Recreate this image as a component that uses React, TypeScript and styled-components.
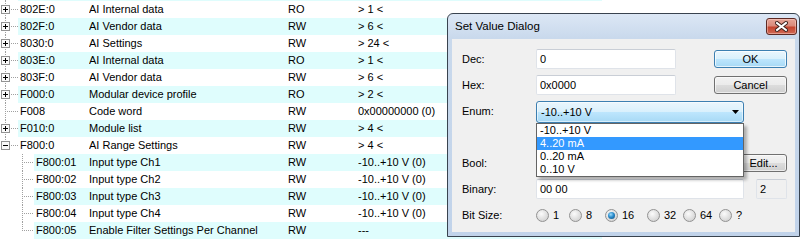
import React from 'react';
import styled, { createGlobalStyle } from 'styled-components';

const GlobalStyle = createGlobalStyle`
  html, body { margin: 0; padding: 0; background: #fff; }
  body { font-family: "Liberation Sans", Arial, sans-serif; font-size: 11px; color: #000; }
  * { box-sizing: border-box; }
`;

const Screen = styled.div`
  position: relative;
  width: 805px;
  height: 241px;
  overflow: hidden;
  background: #fff;
`;

/* ---------- tree list ---------- */

const Tree = styled.div`
  display: flex;
  flex-direction: column;
  width: 602px;
  margin-top: -16px;
`;

const Row = styled.div`
  display: flex;
  height: 17px;
`;

const Gutter = styled.div<{ $level: number }>`
  flex: none;
  width: ${(p) => (p.$level ? 34 : 18)}px;
  height: 17px;
  svg { display: block; }
`;

const RowBody = styled.div<{ $alt: boolean; $level: number }>`
  flex: 1;
  display: grid;
  grid-template-columns: ${(p) => (p.$level ? 53 : 69)}px 199px 70px 1fr;
  align-items: center;
  padding-left: 2px;
  background: ${(p) => (p.$alt ? '#dffdfd' : '#ffffff')};
  white-space: nowrap;
  line-height: 17px;
`;

const Cell = styled.span`
  overflow: hidden;
`;

type TreeRow = {
  idx: string;
  name: string;
  flags: string;
  value: string;
  level: number;
  box?: '+' | '-';
  last?: boolean;
};

const rows: TreeRow[] = [
  { idx: '', name: '', flags: '', value: '', level: 0, box: undefined },
  { idx: '802E:0', name: 'AI Internal data', flags: 'RO', value: '> 1 <', level: 0, box: '+' },
  { idx: '802F:0', name: 'AI Vendor data', flags: 'RW', value: '> 6 <', level: 0, box: '+' },
  { idx: '8030:0', name: 'AI Settings', flags: 'RW', value: '> 24 <', level: 0, box: '+' },
  { idx: '803E:0', name: 'AI Internal data', flags: 'RO', value: '> 1 <', level: 0, box: '+' },
  { idx: '803F:0', name: 'AI Vendor data', flags: 'RW', value: '> 6 <', level: 0, box: '+' },
  { idx: 'F000:0', name: 'Modular device profile', flags: 'RO', value: '> 2 <', level: 0, box: '+' },
  { idx: 'F008', name: 'Code word', flags: 'RW', value: '0x00000000 (0)', level: 0 },
  { idx: 'F010:0', name: 'Module list', flags: 'RW', value: '> 4 <', level: 0, box: '+' },
  { idx: 'F800:0', name: 'AI Range Settings', flags: 'RW', value: '> 4 <', level: 0, box: '-', last: true },
  { idx: 'F800:01', name: 'Input type Ch1', flags: 'RW', value: '-10..+10 V (0)', level: 1 },
  { idx: 'F800:02', name: 'Input type Ch2', flags: 'RW', value: '-10..+10 V (0)', level: 1 },
  { idx: 'F800:03', name: 'Input type Ch3', flags: 'RW', value: '-10..+10 V (0)', level: 1 },
  { idx: 'F800:04', name: 'Input type Ch4', flags: 'RW', value: '-10..+10 V (0)', level: 1 },
  { idx: 'F800:05', name: 'Enable Filter Settings Per Channel', flags: 'RW', value: '---', level: 1, last: true },
];

const LINE = '#a0a0a0';

function TreeLines({ level, box, last }: { level: number; box?: '+' | '-'; last?: boolean }) {
  const w = level ? 34 : 18;
  return (
    <svg width={w} height={17}>
      {level === 0 ? (
        <g stroke={LINE} strokeWidth={1} strokeDasharray="1 1">
          <line x1={5.5} y1={0} x2={5.5} y2={last ? 9 : 17} />
          <line x1={box ? 11 : 7} y1={8.5} x2={18} y2={8.5} />
        </g>
      ) : (
        <g stroke={LINE} strokeWidth={1} strokeDasharray="1 1">
          <line x1={22.5} y1={0} x2={22.5} y2={last ? 9 : 17} />
          <line x1={24} y1={8.5} x2={34} y2={8.5} />
        </g>
      )}
      {box && (
        <g>
          <rect x={1.5} y={4.5} width={8} height={8} fill="#fafafa" stroke="#939393" />
          <line x1={3} y1={8.5} x2={8} y2={8.5} stroke="#000" />
          {box === '+' && <line x1={5.5} y1={6} x2={5.5} y2={11} stroke="#000" />}
        </g>
      )}
    </svg>
  );
}

/* ---------- dialog window ---------- */

const Dialog = styled.div`
  position: absolute;
  left: 447px;
  top: 13px;
  width: 353px;
  display: flex;
  flex-direction: column;
  border: 1px solid #39434f;
  border-radius: 6px 6px 0 0;
  background: linear-gradient(to bottom, #dce7f5 0px, #c9d9ec 24px, #c1d3ea 100%);
  padding: 0 4px 4px;
  z-index: 1;
`;

const TitleBar = styled.div`
  display: flex;
  align-items: flex-start;
  height: 25px;
  margin-right: -2px;
`;

const Title = styled.div`
  flex: 1;
  font-size: 11.5px;
  line-height: 25px;
  padding-left: 3px;
  color: #000;
`;

const CloseButton = styled.div`
  width: 31px;
  height: 17px;
  margin-top: 4px;
  border: 1px solid #5d2a24;
  border-radius: 3px;
  background: linear-gradient(to bottom, #e7a597 0%, #d98a7b 45%, #c5452f 55%, #cf6a55 100%);
  box-shadow: inset 0 0 0 1px rgba(255, 220, 210, 0.45);
  display: flex;
  align-items: center;
  justify-content: center;
  svg { display: block; }
`;

const Client = styled.div`
  height: 193px;
  background: #f0f0f0;
`;

const Form = styled.div`
  display: grid;
  grid-template-columns: 74px 140px 38px 30px 12px 31px;
  grid-template-rows: repeat(7, 26px);
  padding: 10px 0 0 10px;
`;

const Label = styled.div<{ $row: number }>`
  grid-column: 1;
  grid-row: ${(p) => p.$row};
  height: 20px;
  line-height: 20px;
`;

const TextBox = styled.div<{ $col: string; $row: number; $readOnly?: boolean }>`
  grid-column: ${(p) => p.$col};
  grid-row: ${(p) => p.$row};
  height: 20px;
  border: 1px solid #dfe3e9;
  border-top-color: #c9ced6;
  border-radius: 2px;
  background: ${(p) => (p.$readOnly ? '#f0f0f0' : '#ffffff')};
  padding-left: 3px;
  line-height: 18px;
`;

const Button = styled.div<{ $col: string; $row: number; $primary?: boolean; $width?: number }>`
  grid-column: ${(p) => p.$col};
  grid-row: ${(p) => p.$row};
  justify-self: end;
  width: ${(p) => (p.$width ? `${p.$width}px` : '100%')};
  height: 18px;
  margin-top: 1px;
  border: 1px solid ${(p) => (p.$primary ? '#3c7fb1' : '#707070')};
  border-radius: 3px;
  background: ${(p) =>
    p.$primary
      ? 'linear-gradient(to bottom, #eaf6fd 0%, #d9f0fc 50%, #bee6fd 50%, #a7d9f5 100%)'
      : 'linear-gradient(to bottom, #f2f2f2 0%, #ebebeb 50%, #dddddd 50%, #cfcfcf 100%)'};
  box-shadow: inset 0 0 0 1px ${(p) => (p.$primary ? 'rgba(255,255,255,0.7)' : 'rgba(255,255,255,0.6)')};
  text-align: center;
  line-height: 16px;
`;

const ComboWrap = styled.div<{ $col: string; $row: number }>`
  grid-column: ${(p) => p.$col};
  grid-row: ${(p) => p.$row};
  position: relative;
  height: 22px;
`;

const ComboBox = styled.div`
  height: 22px;
  border: 1px solid #3c7fb1;
  border-radius: 3px;
  background: linear-gradient(to bottom, #eaf6fd 0%, #d9f0fc 50%, #bee6fd 50%, #a7d9f5 100%);
  box-shadow: inset 0 0 0 1px rgba(255, 255, 255, 0.55);
  display: flex;
  align-items: center;
  justify-content: space-between;
  padding: 0 4px 0 4px;
  svg { display: block; }
`;

const ListPopup = styled.div`
  position: absolute;
  left: 0;
  top: 100%;
  width: 208px;
  border: 1px solid #646464;
  background: #fff;
  box-shadow: 3px 3px 3px rgba(0, 0, 0, 0.28);
  z-index: 2;
`;

const ListItem = styled.div<{ $selected?: boolean }>`
  height: 13px;
  line-height: 13px;
  padding-left: 3px;
  background: ${(p) => (p.$selected ? '#3399ff' : 'transparent')};
  color: ${(p) => (p.$selected ? '#ffffff' : '#000000')};
`;

const RadioRow = styled.div<{ $col: string; $row: number }>`
  grid-column: ${(p) => p.$col};
  grid-row: ${(p) => p.$row};
  display: flex;
  align-items: center;
  height: 20px;
`;

const RadioItem = styled.div<{ $w?: number }>`
  display: flex;
  align-items: center;
  width: ${(p) => (p.$w ? `${p.$w}px` : 'auto')};
  flex: none;
`;

const RadioDot = styled.span<{ $on?: boolean }>`
  width: 13px;
  height: 13px;
  border-radius: 50%;
  border: 1px solid #929292;
  background: radial-gradient(circle at 40% 35%, #fbfbfb 0%, #e4e4e4 45%, #c9c9c9 100%);
  display: flex;
  align-items: center;
  justify-content: center;
  margin-right: 4px;
  &::after {
    content: '';
    display: ${(p) => (p.$on ? 'block' : 'none')};
    width: 7px;
    height: 7px;
    border-radius: 50%;
    background: radial-gradient(circle at 40% 35%, #9fdcfb 0%, #2a8ccc 45%, #0c4877 100%);
  }
`;

const radios = [
  { label: '1', w: 33 },
  { label: '8', w: 36 },
  { label: '16', w: 42, on: true },
  { label: '32', w: 36 },
  { label: '64', w: 36 },
  { label: '?', w: 0 },
];

const enumItems = ['-10..+10 V', '4..20 mA', '0..20 mA', '0..10 V'];

export default function App() {
  return (
    <Screen>
      <GlobalStyle />
      <Tree>
        {rows.map((r, i) => (
          <Row key={i}>
            <Gutter $level={r.level}>
              <TreeLines level={r.level} box={r.box} last={r.last} />
            </Gutter>
            <RowBody $alt={i % 2 === 0} $level={r.level}>
              <Cell>{r.idx}</Cell>
              <Cell>{r.name}</Cell>
              <Cell>{r.flags}</Cell>
              <Cell>{r.value}</Cell>
            </RowBody>
          </Row>
        ))}
      </Tree>

      <Dialog>
        <TitleBar>
          <Title>Set Value Dialog</Title>
          <CloseButton>
            <svg width="13" height="11" viewBox="0 0 13 11">
              <path d="M2 2 L11 9 M11 2 L2 9" stroke="#3b1f1a" strokeWidth="4" strokeLinecap="square" />
              <path d="M2 2 L11 9 M11 2 L2 9" stroke="#ffffff" strokeWidth="2" strokeLinecap="square" />
            </svg>
          </CloseButton>
        </TitleBar>
        <Client>
          <Form>
            <Label $row={1}>Dec:</Label>
            <TextBox $col="2" $row={1}>0</TextBox>
            <Button $col="4 / 7" $row={1} $primary>OK</Button>

            <Label $row={2}>Hex:</Label>
            <TextBox $col="2" $row={2}>0x0000</TextBox>
            <Button $col="4 / 7" $row={2}>Cancel</Button>

            <Label $row={3}>Enum:</Label>
            <ComboWrap $col="2 / 5" $row={3}>
              <ComboBox>
                <span>-10..+10 V</span>
                <svg width="7" height="4" viewBox="0 0 7 4">
                  <path d="M0 0 H7 L3.5 4 Z" fill="#000" />
                </svg>
              </ComboBox>
              <ListPopup>
                {enumItems.map((t, i) => (
                  <ListItem key={t} $selected={i === 1}>{t}</ListItem>
                ))}
              </ListPopup>
            </ComboWrap>

            <Label $row={5}>Bool:</Label>
            <Button $col="4 / 7" $row={5} $width={47}>Edit...</Button>

            <Label $row={6}>Binary:</Label>
            <TextBox $col="2 / 5" $row={6}>00 00</TextBox>
            <TextBox $col="6" $row={6} $readOnly>2</TextBox>

            <Label $row={7}>Bit Size:</Label>
            <RadioRow $col="2 / 7" $row={7}>
              {radios.map((r) => (
                <RadioItem key={r.label} $w={r.w || undefined}>
                  <RadioDot $on={r.on} />
                  <span>{r.label}</span>
                </RadioItem>
              ))}
            </RadioRow>
          </Form>
        </Client>
      </Dialog>
    </Screen>
  );
}
